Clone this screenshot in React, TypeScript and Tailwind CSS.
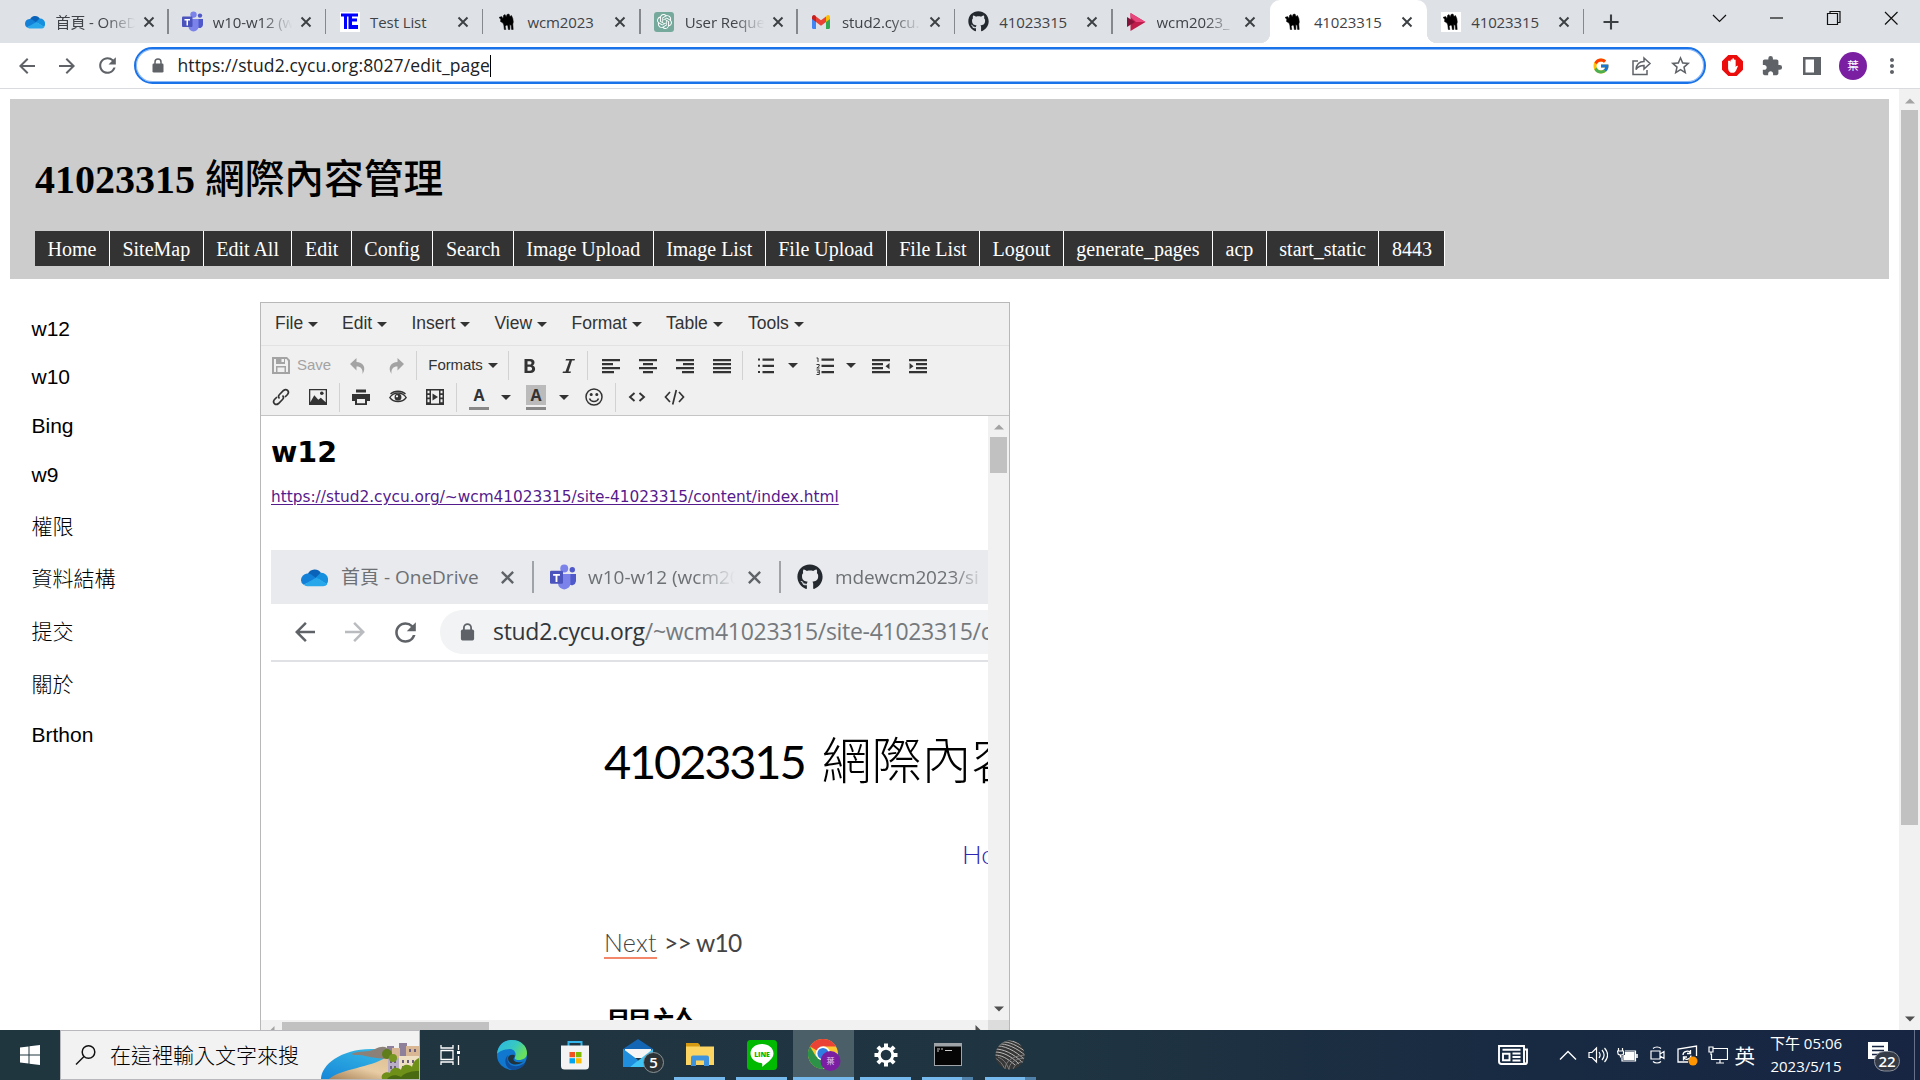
import React from "react";
import type { ReactNode } from "react";
import {
  MdArrowBack,
  MdArrowForward,
  MdRefresh,
  MdExtension,
  MdStarBorder,
  MdMoreVert,
} from "react-icons/md";
import { FcGoogle } from "react-icons/fc";
import { FaGithub } from "react-icons/fa";
import { SiOpenai } from "react-icons/si";

/* ---------- brand icons ---------- */

function OneDrive({ className = "w-5 h-5" }: { className?: string }) {
  return (
    <svg viewBox="0 0 20 20" className={className}>
      <path d="M5 7.5A5.5 5.5 0 0 1 15 7l-3 6-7 1z" fill="#0a63b8" />
      <path d="M4.5 7A5 5 0 0 0 0 12a4 4 0 0 0 2 3.4L12 11 7.5 7.8A5 5 0 0 0 4.5 7z" fill="#1380d8" />
      <path d="M14.5 6.5A5 5 0 0 1 20 12a4 4 0 0 1-1 3l-8-5z" fill="#1490df" />
      <path d="M2 15.3 11.5 10l8 5A4 4 0 0 1 16 16.5H4.5a4 4 0 0 1-2.5-1.2z" fill="#28a8ea" />
    </svg>
  );
}

function Teams({ className = "w-[21px] h-[21px]" }: { className?: string }) {
  return (
    <svg viewBox="0 0 21 21" className={className}>
      <circle cx="11.5" cy="3.6" r="3.2" fill="#7b83eb" />
      <circle cx="18" cy="4.6" r="2.2" fill="#5059c9" />
      <path d="M14 8h7v6a3.5 3.5 0 0 1-6 2z" fill="#5059c9" />
      <path d="M6.500 8h10v7.500a5 5 0 0 1-10 0z" fill="#7b83eb" />
      <rect x="0" y="5.500" width="10.500" height="10.500" rx="1" fill="#4b53bc" />
      <path d="M2.500 8h5.500v1.500H6v5H4.500v-5h-2z" fill="#fff" />
    </svg>
  );
}

function TestList() {
  return (
    <svg viewBox="0 0 20 20" className="w-5 h-5">
      <rect width="20" height="20" fill="#fff" />
      <path d="M1 1.500h17v3h-6v2h5v3h-5v3.500h6v4H8.500V4.500H7v12.500H4V4.500H1z" fill="#0000ff" />
    </svg>
  );
}

function Camel({ boxed = false }: { boxed?: boolean }) {
  return (
    <svg viewBox="0 0 20 20" className="w-5 h-5">
      {boxed && <rect width="20" height="20" fill="#fff" />}
      <path
        d="M2 5.500 4.500 4.500 6 6.500 6.500 3.500 8 2.500 9.200 5 10 2.500 12 2 13 4.500 14.500 3.500 15.800 6.500 16.300 10 15.800 12 16.200 17.500H14.600L14.200 13.500 12.800 12.500 12.900 17.500H11.300L10.800 13.500 9.500 13 8.200 14.500 8.800 17.500H7.300L6.800 13 6 11 3.500 9.500 3.800 7.200z"
        fill="#000"
        stroke="#000"
        strokeWidth=".5"
      />
    </svg>
  );
}

function ChatGpt() {
  return (
    <span className="flex h-5 w-5 items-center justify-center rounded-[3px] bg-[#75a99c] text-white">
      <SiOpenai size={15} />
    </span>
  );
}

function Gmail() {
  return (
    <svg viewBox="0 0 20 20" className="w-5 h-5">
      <path d="M1 6v9.500A1.500 1.500 0 0 0 2.500 17H5V9z" fill="#4285f4" />
      <path d="M19 6v9.500a1.500 1.500 0 0 1-1.500 1.500H15V9z" fill="#34a853" />
      <path d="M15 5v5l4-3V5a2 2 0 0 0-3.300-1.500z" fill="#fbbc04" />
      <path d="M5 10V4.500l5 3.800 5-3.800V10l-5 3.800z" fill="#ea4335" />
      <path d="M1 5v2l4 3V4.500L4.300 3.500A2 2 0 0 0 1 5z" fill="#c5221f" />
    </svg>
  );
}

function Stream() {
  return (
    <svg viewBox="0 0 20 20" className="w-5 h-5">
      <path d="M4.500 1 19.500 10 4.500 19z" fill="#c01c4b" />
      <path d="M4.500 1 19.500 10H10L4.500 5z" fill="#e8467c" />
      <path d="M1 5v10l8-5z" fill="#86143a" />
    </svg>
  );
}

/* ---------- browser chrome ---------- */

function Cross({ className, color = "#3c4043" }: { className: string; color?: string }) {
  return (
    <svg viewBox="0 0 12 12" className={className} stroke={color} strokeWidth="1.900" fill="none">
      <path d="M1.500 1.500 10.500 10.500M10.500 1.500 1.500 10.500" />
    </svg>
  );
}

function Lock({ className }: { className: string }) {
  return (
    <svg viewBox="0 0 12 15" className={className}>
      <path d="M3 7V4a3 3 0 0 1 6 0v3" fill="none" stroke="#5f6368" strokeWidth="1.500" />
      <rect x=".5" y="5.500" width="11" height="9" rx="1.300" fill="#5f6368" />
    </svg>
  );
}

type TabInfo = { icon: ReactNode; title: string; active?: boolean; fade?: boolean; sep?: boolean };

const tabs: TabInfo[] = [
  { icon: <OneDrive />, title: "首頁 - OneD", fade: true, sep: true },
  { icon: <Teams />, title: "w10-w12 (w", fade: true, sep: true },
  { icon: <TestList />, title: "Test List", sep: true },
  { icon: <Camel />, title: "wcm2023", sep: true },
  { icon: <ChatGpt />, title: "User Reque", fade: true, sep: true },
  { icon: <Gmail />, title: "stud2.cycu.", fade: true, sep: true },
  { icon: <FaGithub size={21} color="#24292f" />, title: "41023315", sep: true },
  { icon: <Stream />, title: "wcm2023_", fade: true },
  { icon: <Camel />, title: "41023315", active: true },
  { icon: <Camel boxed />, title: "41023315", sep: true },
];

const ui = "font-['Open_Sans','Noto_Sans_CJK_TC',sans-serif]";

function Tab({ icon, title, active, fade, sep }: TabInfo) {
  return (
    <div className={"relative flex h-[43px] w-[157.3px] shrink-0 items-center pl-[13px] " + (active ? "rounded-t-[10px] bg-white" : "")}>
      {active && (
        <>
          <span className="absolute bottom-0 -left-[10px] h-[10px] w-[10px] bg-[radial-gradient(circle_at_0_0,transparent_10px,#fff_10.5px)]" />
          <span className="absolute bottom-0 -right-[10px] h-[10px] w-[10px] bg-[radial-gradient(circle_at_100%_0,transparent_10px,#fff_10.5px)]" />
        </>
      )}
      <span className="flex w-[21px] shrink-0 justify-center">{icon}</span>
      <span
        className={
          "ml-[10px] w-[81px] whitespace-nowrap pt-px text-[15px] leading-6 tracking-[-0.1px] text-[#3f4347] " +
          (fade ? "[mask-image:linear-gradient(to_right,#000_60%,transparent_98%)]" : "")
        }
      >
        {title}
      </span>
      <Cross className="ml-[6px] h-[12px] w-[12px] shrink-0" />
      {sep && <span className="ml-auto h-[25px] w-[1.5px] bg-[#85888c]" />}
    </div>
  );
}

function TabStrip() {
  return (
    <div className="flex h-[43px] bg-[#dee1e6] pl-[11.5px]">
      {tabs.map((t, i) => (
        <Tab key={i} {...t} />
      ))}
      <div className="flex flex-1 items-center">
        <svg viewBox="0 0 16 16" className="ml-[19px] h-[16px] w-[16px]" stroke="#3c4043" strokeWidth="2.100">
          <path d="M8 .5v15M.5 8h15" />
        </svg>
        <svg viewBox="0 0 200 20" className="mb-[7px] ml-auto mr-[17px] h-5 w-[200px]" fill="none" stroke="#111" strokeWidth="1.2">
          <path d="M10 7 16.500 13.500 23 7" />
          <path d="M67 10H80" />
          <path d="M124.500 5.500h10v11h-10zM127 5.500v-2h10v11h-2" />
          <path d="M182 4 194.500 16.500M194.500 4 182 16.500" />
        </svg>
      </div>
    </div>
  );
}

function Toolbar() {
  return (
    <div className="flex h-[46px] items-center border-b border-[#d9dbde] bg-white text-[#5f6368]">
      <div className="flex w-[134px] items-center gap-[16px] pl-[15px]">
        <MdArrowBack size={24} />
        <MdArrowForward size={24} />
        <MdRefresh size={25} />
      </div>
      <div className="flex h-[37px] w-[1572px] items-center rounded-full border-2 border-[#1a73e8] pl-[16px] pr-[12px] shadow-[inset_0_0_0_1px_#8ab8f7]">
        <Lock className="h-[15px] w-[12px]" />
        <span className="mb-px ml-[13.5px] whitespace-nowrap text-[17.5px] tracking-[0.12px] text-[#202124]">
          https://stud2.cycu.org:8027/edit_page
        </span>
        <span className="h-[22px] w-px bg-black" />
        <div className="ml-auto flex items-center">
          <FcGoogle size={18} />
          <svg viewBox="0 0 22 22" className="ml-[20px] h-[22px] w-[22px]" fill="none" stroke="#5f6368" strokeWidth="1.500">
            <path d="M8 6H3v13.500h14V15" />
            <path d="M14 3l6 5.500-6 5.500v-3.500c-4 0-6 1-8 4 .5-5 3.500-8 8-8z" />
          </svg>
          <MdStarBorder size={23} className="ml-[17px]" />
        </div>
      </div>
      <svg viewBox="0 0 20 20" className="ml-[16px] h-[21px] w-[21px]">
        <path d="M6 0h8l6 6v8l-6 6H6l-6-6V6z" fill="#eb0c0c" />
        <path
          d="M5.800 6v6.500c0 3 2 4.500 4 4.500s3-1 3.700-2.500l1.700-4c-.7-.7-1.500-.3-2.200 1V5c0-1-1.500-1-1.500 0V3.800c0-1-1.700-1-1.700 0V5c0-1-1.600-1-1.600 0v2c0-1.500-2.400-1.800-2.400-1z"
          fill="#fff"
        />
      </svg>
      <MdExtension size={22} className="ml-[18px]" />
      <svg viewBox="0 0 18 18" className="ml-[20px] h-[18px] w-[18px]">
        <path d="M0 0h18v18H0zM2.500 2.500v13H11v-13z" fill="#5f6368" fillRule="evenodd" />
      </svg>
      <span className="ml-[18px] flex h-[28px] w-[28px] items-center justify-center rounded-full bg-[#7b1fa2] text-[11.5px] text-white">
        葉
      </span>
      <MdMoreVert size={24} className="ml-[13px]" />
    </div>
  );
}

/* ---------- page ---------- */

const nav = [
  "Home", "SiteMap", "Edit All", "Edit", "Config", "Search", "Image Upload", "Image List",
  "File Upload", "File List", "Logout", "generate_pages", "acp", "start_static", "8443",
];

function Header() {
  return (
    <header className="h-[180px] bg-[#cccccc] pl-[25px] font-['Liberation_Serif','Noto_Sans_CJK_TC',serif]">
      <h1 className="h-[132px] whitespace-nowrap pt-[51px] text-[40px] font-bold leading-[60px] text-black">
        41023315 <span className="text-[39.7px] font-medium">網際內容管理</span>
      </h1>
      <nav className="flex">
        {nav.map((n) => (
          <a key={n} className="h-[35px] whitespace-nowrap border-r border-white bg-[#333] px-[12.5px] text-[20px] leading-[36px] text-white">
            {n}
          </a>
        ))}
      </nav>
    </header>
  );
}

const side: [string, string][] = [
  ["w12", "h-[49px]"],
  ["w10", "h-[48px]"],
  ["Bing", "h-[49px]"],
  ["w9", "h-[50px]"],
  ["權限", "h-[53px]"],
  ["資料結構", "h-[52px]"],
  ["提交", "h-[54px]"],
  ["關於", "h-[51px]"],
  ["Brthon", "h-[49px]"],
];

function Sidebar() {
  return (
    <aside className="w-[250px] pl-[21.5px] pt-[25px] font-['Liberation_Sans','Noto_Sans_CJK_TC',sans-serif] text-[21px] text-black">
      {side.map(([t, h]) => (
        <div key={t} className={h + " flex items-center font-light"}>
          {t}
        </div>
      ))}
    </aside>
  );
}

function Caret() {
  return <span className="h-0 w-0 border-x-[5px] border-t-[5px] border-x-transparent border-t-[#333]" />;
}

function Cell({ w, children }: { w: string; children?: ReactNode }) {
  return <div className={"flex h-full shrink-0 items-center justify-center " + w}>{children}</div>;
}

function Sep({ className = "" }: { className?: string }) {
  return <span className={"h-[29px] w-px shrink-0 bg-[#d2d2d2] " + className} />;
}

function Icon({ children, fill = "#333" }: { children: ReactNode; fill?: string }) {
  return (
    <svg viewBox="0 0 18 18" className="h-[18px] w-[18px] shrink-0" fill={fill}>
      {children}
    </svg>
  );
}

const menus: [string, string][] = [
  ["File", "w-[67px]"],
  ["Edit", "w-[69.5px]"],
  ["Insert", "w-[83px]"],
  ["View", "w-[77px]"],
  ["Format", "w-[94.5px]"],
  ["Table", "w-[82px]"],
  ["Tools", "w-[82px]"],
];

function EditorBars() {
  return (
    <div className="bg-[#f0f0f0] font-['Liberation_Sans',sans-serif] text-[#333]">
      <div className="flex h-[42px] items-center pl-[14px] text-[17.5px] leading-none">
        {menus.map(([m, w]) => (
          <span key={m} className={w + " flex items-center gap-[5px] whitespace-nowrap"}>
            {m}
            <Caret />
          </span>
        ))}
      </div>
      <div className="h-[71px] border-y border-t-[#e2e2e2] border-b-[#c5c5c5]">
        <div className="flex h-[32px] items-center pt-[7px]">
          <Cell w="w-[78px] pl-[3px]">
            <svg viewBox="0 0 18 17" className="mr-[7px] h-[17px] w-[18px]" fill="#a3a3a3" fillRule="evenodd">
              <path d="M0 0h15l3 3v14H0zM2 2v13h2V9h10v6h2V4l-1.500-2H13v5H4V2zM9.500 2v3H12V2zM5.500 10.500V15h7v-4.500z" />
            </svg>
            <span className="text-[15px] text-[#a3a3a3]">Save</span>
          </Cell>
          <Cell w="w-[38px]">
            <Icon fill="#a3a3a3">
              <path d="M7.500 1v4c6 0 10.500 5 6 12C14 12 12 9.500 7.500 9.500v4L1 7z" />
            </Icon>
          </Cell>
          <Cell w="w-[38px]">
            <Icon fill="#a3a3a3">
              <path d="M10.500 1v4C4.500 5 0 10 4.500 17 4 12 6 9.500 10.500 9.500v4L17 7z" />
            </Icon>
          </Cell>
          <Sep className="ml-px" />
          <Cell w="w-[91px] pl-px">
            <span className="mr-[5px] text-[15px] tracking-[-0.1px]">Formats</span>
            <Caret />
          </Cell>
          <Sep />
          <Cell w="w-[41px]">
            <Icon>
              <path d="M3.500 2h6c5 0 5 5.500 2 6.500 4 1 3.500 7.500-2 7.500h-6zM6.500 4.300v3.300H9c2 0 2-3.300 0-3.300zm0 5.400v4H9c2.800 0 2.800-4 0-4z" fillRule="evenodd" />
            </Icon>
          </Cell>
          <Cell w="w-[37px]">
            <Icon>
              <path d="M6 2h9l-.5 1.500h-2.500L8.500 14.500H11l-.5 1.500h-8L3 14.500h2.500L9.500 3.500h-4z" />
            </Icon>
          </Cell>
          <Sep />
          <Cell w="w-[41px] pl-[4px]">
            <Icon><path d="M0 2h18v2.300H0zM0 6h11v2.300H0zM0 10h18v2.300H0zM0 14h12v2.300H0z" /></Icon>
          </Cell>
          <Cell w="w-[37px]">
            <Icon><path d="M0 2h18v2.300H0zM4 6h10v2.300H4zM0 10h18v2.300H0zM4 14h10v2.300H4z" /></Icon>
          </Cell>
          <Cell w="w-[37px]">
            <Icon><path d="M0 2h18v2.300H0zM7 6h11v2.300H7zM0 10h18v2.300H0zM6 14h12v2.300H6z" /></Icon>
          </Cell>
          <Cell w="w-[37px]">
            <Icon><path d="M0 2h18v2.300H0zM0 6h18v2.300H0zM0 10h18v2.300H0zM0 14h18v2.300H0z" /></Icon>
          </Cell>
          <Sep className="ml-[2px]" />
          <Cell w="w-[46px]">
            <Icon><path d="M5.500 1.500H17v2.200H5.500zM5.500 7.800H17V10H5.500zM5.500 14H17v2.200H5.500zM1 1.500h2v2H1zM1 7.800h2v2H1zM1 14h2v2H1z" /></Icon>
          </Cell>
          <Cell w="w-[8px]"><Caret /></Cell>
          <Cell w="w-[50px] pl-[5px]">
            <svg viewBox="0 0 18 18" className="h-[18px] w-[18px]" fill="#333">
              <path d="M5.500 1.500H18v2.200H5.500zM5.500 7.800H18V10H5.500zM5.500 14H18v2.200H5.500z" />
              <path d="M.5 1H2v4M.5 7.500h2.700v1.700L.8 11h2.700M.5 13h2.800v4.500H.5M1 15.200h2" fill="none" stroke="#333" />
            </svg>
          </Cell>
          <Cell w="w-[8px]"><Caret /></Cell>
          <Cell w="w-[52px]">
            <Icon><path d="M0 2h18v2.300H0zM0 6h11v2.300H0zM0 10h11v2.300H0zM0 14h18v2.300H0zM17.500 6v6.300L13.500 9.200z" /></Icon>
          </Cell>
          <Cell w="w-[22px]">
            <Icon><path d="M0 2h18v2.300H0zM7 6h11v2.300H7zM7 10h11v2.300H7zM0 14h18v2.300H0zM.5 6v6.300L4.500 9.200z" /></Icon>
          </Cell>
        </div>
        <div className="flex h-[34px] items-center pt-[4px]">
          <Cell w="w-[38px] pl-[2px]">
            <svg viewBox="0 0 18 18" className="h-[18px] w-[18px]" fill="none" stroke="#333" strokeWidth="1.700">
              <path d="M7.500 10.500c-1.500-1.500-1-3 0-4l4-4c3-2.500 6.500 1 4 4l-2.500 2.500" />
              <path d="M10.500 7.500c1.500 1.500 1 3 0 4l-4 4c-3 2.500-6.500-1-4-4L5 9" />
            </svg>
          </Cell>
          <Cell w="w-[38px]">
            <Icon><path d="M0 1h18v16H0zM1.300 2.300v12l4-7 4 4.500 2.500-2 4.900 4.500v-12z" fillRule="evenodd" /><circle cx="12.800" cy="5.200" r="1.800" /></Icon>
          </Cell>
          <Sep className="ml-[2px]" />
          <Cell w="w-[39px] pl-[3px]">
            <Icon><path d="M4 1.500h10v3H4zM0 6h18v7h-3v4H3v-4H0zM5 11v4.200h8V11z" fillRule="evenodd" /></Icon>
          </Cell>
          <Cell w="w-[37px]">
            <svg viewBox="0 0 18 18" className="h-[18px] w-[18px]" fill="none" stroke="#333" strokeWidth="1.300">
              <path d="M.8 9.500c4-6 12.400-6 16.400 0-4 5.500-12.400 5.500-16.400 0z" />
              <path d="M1.500 6C5 2.300 13 2.300 16.500 6" />
              <circle cx="9" cy="9.300" r="2.800" fill="#333" />
              <circle cx="8" cy="8.300" r="1.100" fill="#fff" stroke="none" />
            </svg>
          </Cell>
          <Cell w="w-[37px]">
            <Icon>
              <path d="M0 1h18v16H0zM5 2.500v13h8v-13zM1.500 2.800v2.400h2V2.800zm0 4.200v2.400h2V7zm0 4.200v3h2v-3zM14.500 2.800v2.400h2V2.800zm0 4.200v2.400h2V7zm0 4.200v3h2v-3z" fillRule="evenodd" />
              <path d="M6.500 5.500 12 9l-5.500 3.500z" />
            </Icon>
          </Cell>
          <Sep className="ml-[3px]" />
          <Cell w="w-[44px]">
            <span className="flex flex-col items-center">
              <span className="flex h-[20px] w-5 items-center justify-center font-['Open_Sans',sans-serif] text-[16px] font-bold leading-5">A</span>
              <span className="mt-[2px] h-[3px] w-5 bg-[#888]" />
            </span>
          </Cell>
          <Cell w="w-[10px]"><Caret /></Cell>
          <Cell w="w-[50px]">
            <span className="flex flex-col items-center">
              <span className="flex h-[20px] w-5 items-center justify-center bg-[#bbb] font-['Open_Sans',sans-serif] text-[16px] font-bold leading-5">A</span>
              <span className="mt-[2px] h-[3px] w-5 bg-[#888]" />
            </span>
          </Cell>
          <Cell w="w-[6px]"><Caret /></Cell>
          <Cell w="w-[48px]">
            <svg viewBox="0 0 18 18" className="ml-[6px] h-[18px] w-[18px]" fill="none" stroke="#333" strokeWidth="1.500">
              <circle cx="9" cy="9" r="8" />
              <path d="M4.500 10.500c1.500 4 7.500 4 9 0" />
              <circle cx="6.200" cy="6.500" r=".8" fill="#333" />
              <circle cx="11.800" cy="6.500" r=".8" fill="#333" />
            </svg>
          </Cell>
          <Cell w="w-0"><Sep /></Cell>
          <Cell w="w-[44px]">
            <svg viewBox="0 0 18 18" className="h-[18px] w-[18px]" fill="none" stroke="#333" strokeWidth="1.900">
              <path d="M6.500 5 2 9l4.500 4M11.500 5 16 9l-4.500 4" />
            </svg>
          </Cell>
          <Cell w="w-[30px]">
            <svg viewBox="0 0 21 18" className="h-[18px] w-[21px]" fill="none" stroke="#333" strokeWidth="1.700">
              <path d="M6 4 1.500 9 6 14M15 4l4.500 5L15 14M12.300 2 8.700 16.500" />
            </svg>
          </Cell>
        </div>
      </div>
    </div>
  );
}

function PastedShot() {
  return (
    <div className={"w-[1200px] " + ui}>
      <div className="flex h-[54px] items-center bg-[#e8eaed] text-[20px] text-[#6d7074]">
        <OneDrive className="ml-[30px] h-[27px] w-[27px] shrink-0" />
        <span className="ml-[13px] w-[150px] whitespace-nowrap text-[19px]">首頁 - OneDrive</span>
        <Cross color="#5f6368" className="ml-[9px] h-[15px] w-[15px] shrink-0" />
        <span className="ml-[17px] h-[32px] w-[2px] shrink-0 bg-[#a0a3a7]" />
        <Teams className="ml-[16px] h-[26px] w-[26px] shrink-0" />
        <span className="ml-[12px] w-[150px] whitespace-nowrap text-[19px] [mask-image:linear-gradient(to_right,#000_72%,transparent_98%)]">
          w10-w12 (wcm20
        </span>
        <Cross color="#5f6368" className="ml-[9px] h-[15px] w-[15px] shrink-0" />
        <span className="ml-[17px] h-[32px] w-[2px] shrink-0 bg-[#a0a3a7]" />
        <FaGithub size={26} color="#24292f" className="ml-[16px] shrink-0" />
        <span className="ml-[12px] w-[150px] whitespace-nowrap text-[19px] tracking-[-0.15px] [mask-image:linear-gradient(to_right,#000_78%,transparent_100%)]">
          mdewcm2023/si
        </span>
      </div>
      <div className="flex h-[58px] items-center border-b-2 border-[#dfe1e4] text-[#5f6368]">
        <MdArrowBack size={30} className="ml-[19px]" />
        <MdArrowForward size={30} color="#b9bbbe" className="ml-[20px]" />
        <MdRefresh size={31} className="ml-[20px]" />
        <div className="ml-[19px] flex h-[44px] flex-1 items-center rounded-l-full bg-[#f1f3f4] pl-[20px]">
          <Lock className="h-[18px] w-[15px]" />
          <span className="mb-[2px] ml-[18px] whitespace-nowrap text-[23px] tracking-[-0.3px] text-[#75797d]">
            <span className="text-[#333639]">stud2.cycu.org</span>/~wcm41023315/site-41023315/c
          </span>
        </div>
      </div>
      <div className="pl-[333px] pt-[64px] font-['Lato','Noto_Sans_CJK_TC',sans-serif]">
        <div className="h-[68px] whitespace-nowrap text-[47px] leading-[68px] text-black">
          <span className="tracking-[-2.2px]">41023315</span>
          <span className="ml-[17px] text-[50px] font-light">網際內容</span>
        </div>
        <div className="mt-[42px] pl-[358px] text-[26px] font-light leading-[36px] text-[#2f26b5]">Ho</div>
        <div className="mt-[52px] whitespace-nowrap text-[25px] leading-[36px] text-[#444]">
          <span className="border-b-2 border-[#f4876a] font-light tracking-[0.3px]">Next</span>
          <span className="ml-[7px] text-[24.500px] tracking-[-0.700px]">&gt;&gt; w10</span>
        </div>
        <div className="mt-[39px] pl-[2px] text-[46px] leading-[58px] text-black">關於</div>
      </div>
    </div>
  );
}

function Triangle({ dir, color }: { dir: "up" | "down" | "left" | "right"; color: string }) {
  const d = {
    up: "M0 7.500 5 2.500 10 7.500z",
    down: "M0 2.500 5 7.500 10 2.500z",
    left: "M7.500 0 2.500 5 7.500 10z",
    right: "M2.500 0 7.500 5 2.500 10z",
  }[dir];
  return (
    <svg viewBox="0 0 10 10" className="h-[10px] w-[10px] shrink-0" fill={color}>
      <path d={d} />
    </svg>
  );
}

function Editor() {
  return (
    <section className="mt-[23px] flex h-[760px] w-[750px] flex-col border border-[#b8b8b8]">
      <EditorBars />
      <div className="flex h-[604px] shrink-0">
        <div className="w-[727px] overflow-hidden pl-[10px] font-['DejaVu_Sans',sans-serif]">
          <h2 className="h-[66px] pt-[20px] text-[28.500px] font-bold leading-[34px] text-black">w12</h2>
          <p className="h-[68px] whitespace-nowrap pt-[3px] text-[15.330px] leading-6 text-[#551a8b] underline underline-offset-2">
            https://stud2.cycu.org/~wcm41023315/site-41023315/content/index.html
          </p>
          <PastedShot />
        </div>
        <div className="flex w-[21px] flex-col items-center bg-[#f1f1f1] pb-[6px] pt-[6px]">
          <Triangle dir="up" color="#a3a3a3" />
          <span className="mt-[5px] h-[36px] w-[17px] bg-[#c1c1c1]" />
          <span className="flex-1" />
          <Triangle dir="down" color="#505050" />
        </div>
      </div>
      <div className="flex h-[21px] shrink-0 bg-[#f1f1f1]">
        <span className="flex w-[21px] justify-center pt-[6px]"><Triangle dir="left" color="#a3a3a3" /></span>
        <span className="mt-[2px] h-[17px] w-[207px] bg-[#c1c1c1]" />
        <span className="ml-auto flex w-[21px] justify-center pt-[5px]"><Triangle dir="right" color="#505050" /></span>
        <span className="w-[21px] bg-[#dcdcdc]" />
      </div>
    </section>
  );
}

/* ---------- taskbar ---------- */

function Illustration() {
  return (
    <svg viewBox="0 0 98 48" className="h-[48px] w-[98px]">
      <defs>
        <linearGradient id="sea" x1="0" y1="1" x2="1" y2="0">
          <stop offset="0" stopColor="#1787d8" />
          <stop offset="1" stopColor="#3cc4e8" />
        </linearGradient>
        <linearGradient id="sand" x1="0" y1="1" x2="1" y2="0">
          <stop offset="0" stopColor="#a98258" />
          <stop offset=".4" stopColor="#e8cda4" />
          <stop offset="1" stopColor="#d9b98b" />
        </linearGradient>
      </defs>
      <path d="M0 48C0 34 20 18 50 18h48v30z" fill="url(#sea)" />
      <path d="M8 48C20 38 50 36 64 27l34-5v26z" fill="url(#sand)" />
      <path d="M30 23c10-4 16-1 24-5s12-2 16 2v8c-8 0-18-1-26-3-4-2-10 0-14-2z" fill="#8b8178" />
      <path d="M66 15h7v12h-7zM78 12h8v14h-8z" fill="#8e7f9b" />
      <path d="M71 17h8v10h-8zM85 15h13v13h-13z" fill="#d9b694" />
      <path d="M67 27h12v18H67z" fill="#b9aec6" />
      <path d="M78 25h20v18H78z" fill="#efe0c4" />
      <path
        d="M69 29h2v3h-2zM73 29h2v3h-2zM69 35h2v3h-2zM73 35h2v3h-2zM81 29h2v3h-2zM86 29h2v3h-2zM91 29h2v3h-2zM81 35h2v3h-2zM86 35h2v3h-2zM88 18h2v3h-2zM93 18h2v3h-2z"
        fill="#6b5f7c"
      />
      <circle cx="66" cy="23" r="5" fill="#5f7d1b" />
      <circle cx="72" cy="27" r="4" fill="#76961f" />
      <path d="M61 48c-2-6 5-8 8-6 1-7 9-6 11-3 1-7 9-6 11-3 1-5 4-8 7-9v21z" fill="#6f9018" />
      <path d="M66 48c3-4 9-5 14-2 4-5 12-6 18-6v8z" fill="#4a6a12" />
    </svg>
  );
}

function Task({ w, bar, active, children }: { w: string; bar?: "full" | "multi"; active?: boolean; children: ReactNode }) {
  return (
    <div className={"flex h-full shrink-0 flex-col items-center " + w + (active ? " bg-[#4b5f69]" : "")}>
      <div className="flex flex-1 items-center justify-center pt-[2px]">{children}</div>
      <div className={"flex h-[3px] " + (active ? "w-full" : "w-[51px]")}>
        {bar && <span className="h-full flex-1 bg-[#76b9ed]" />}
        {bar === "multi" && <span className="h-full w-[11px] bg-[#4f81ab]" />}
      </div>
    </div>
  );
}

function Taskbar() {
  return (
    <footer className={"flex h-[50px] bg-[linear-gradient(to_right,#20363f,#1f3441_55%,#182a42_80%,#172543)] text-white " + ui}>
      <div className="flex w-[60px] items-center justify-center">
        <svg viewBox="0 0 20 20" className="h-5 w-5" fill="#fff">
          <path d="M0 2.600 8.500 1.500v8H0zM9.500 1.300 20 0v9.500H9.500zM0 10.500h8.500v8L0 17.400zM9.500 10.500H20V20L9.500 18.700z" />
        </svg>
      </div>
      <div className="flex w-[360px] items-center border border-[#b9b9bd] bg-[#f2f2f2] pl-[14px] text-black">
        <svg viewBox="0 0 22 22" className="h-[22px] w-[22px]" fill="none" stroke="#111" strokeWidth="1.500">
          <circle cx="13.500" cy="8" r="6.300" />
          <path d="M9 12.500 1 20.500" />
        </svg>
        <span className="ml-[13px] whitespace-nowrap font-['Noto_Sans_CJK_TC',sans-serif] text-[21px] font-light">在這裡輸入文字來搜</span>
        <span className="ml-auto"><Illustration /></span>
      </div>
      <Task w="w-[60px]">
        <svg viewBox="0 0 20 22" className="h-[22px] w-[20px]" fill="none" stroke="#fff" strokeWidth="1.300">
          <path d="M1 1v3h12V1M1 6.500h12v9H1zM1 21v-3h12v3M18.500 1v5M18.500 12v9" />
          <path d="M17 7h3v3h-3z" fill="#fff" stroke="none" />
        </svg>
      </Task>
      <Task w="w-[64px]">
        <svg viewBox="0 0 30 30" className="h-[30px] w-[30px]">
          <defs>
            <linearGradient id="edgeTop" x1="0" y1="0" x2="1" y2=".5">
              <stop offset="0" stopColor="#2bb6e8" />
              <stop offset=".6" stopColor="#38c9c0" />
              <stop offset="1" stopColor="#6ae05a" />
            </linearGradient>
          </defs>
          <circle cx="15" cy="15" r="15" fill="#1178d0" />
          <path d="M0 14C1 4 8 0 15 0c9 0 15 6 15 13 0 5-4 7-8 7-3 0-5-1-4-3 2-4-1-8-5-8-6 0-12 3-13 5z" fill="url(#edgeTop)" />
          <path d="M11 15c-3 8 5 15 15 9 2-1 2.500-1 1.500.5C24 29 19 30 15 30 7 28 7 18 11 15z" fill="#0f4f9e" />
          <path d="M27.500 21c-3 2-11 2-11-2 0-1 2-2 1-4-3-1-6 0-6.500 3 0 7 9 9 16.500 3z" fill="#20343f" />
        </svg>
      </Task>
      <Task w="w-[61px]">
        <svg viewBox="0 0 30 30" className="h-[30px] w-[30px]">
          <path d="M8.500 7V2h13v5" fill="none" stroke="#35b4ea" strokeWidth="2" />
          <path d="M1 5.500h28V26a3.500 3.500 0 0 1-3.500 3.500h-21A3.500 3.500 0 0 1 1 26z" fill="#f3f3f3" />
          <path d="M9.500 12H15v5.200H9.500z" fill="#f25022" />
          <path d="M16 12h5.500v5.200H16z" fill="#7fba00" />
          <path d="M9.500 18.200H15v5.200H9.500z" fill="#00a4ef" />
          <path d="M16 18.200h5.500v5.200H16z" fill="#ffb900" />
        </svg>
      </Task>
      <Task w="w-[64px]">
        <svg viewBox="0 0 42 36" className="ml-[11px] mt-[2px] h-[36px] w-[42px]">
          <path d="M1 11 16 1l15 10v8H1z" fill="#1366b3" />
          <path d="M3 11h26v9H3z" fill="#f5f5f5" />
          <path d="M1 11 24 29H1z" fill="#2b9fe6" />
          <path d="M31 11 8 29h23z" fill="#3fc4f3" />
          <path d="M1 11l15 11L8 29H1z" fill="#1f8fdd" />
          <circle cx="31.500" cy="24.500" r="10" fill="#2b3337" stroke="#8b9498" strokeWidth="1" />
          <text x="31.500" y="30" textAnchor="middle" fontSize="15" fontWeight="600" fill="#fff" fontFamily="Open Sans">5</text>
        </svg>
      </Task>
      <Task w="w-[61px]" bar="full">
        <svg viewBox="0 0 28 24" className="h-[24px] w-[28px]">
          <path d="M0 0h12l2 2v4H0z" fill="#d69a12" />
          <path d="M0 3.500h28V22H0z" fill="#fcd462" />
          <path d="M5 23v-8.500a2 2 0 0 1 2-2h14a2 2 0 0 1 2 2V23h-5v-5.500h-8V23z" fill="#3d93dd" />
        </svg>
      </Task>
      <Task w="w-[63px]" bar="full">
        <svg viewBox="0 0 30 30" className="h-[30px] w-[30px]">
          <rect width="30" height="30" rx="3.500" fill="#00b900" />
          <path d="M15 4c6.500 0 11.500 4 11.500 9.500 0 5-5 8-11.500 13.500.5-2 .5-3.500-.5-4C8 22.500 3.500 18.500 3.500 13.500 3.500 8 8.500 4 15 4z" fill="#fff" />
          <text x="15" y="16.500" textAnchor="middle" fontSize="6.800" fontWeight="800" fill="#00b900" fontFamily="Open Sans">LINE</text>
        </svg>
      </Task>
      <Task w="w-[61px]" bar="full" active>
        <svg viewBox="0 0 33 33" className="ml-[2px] mt-[2px] h-[33px] w-[33px]">
          <circle cx="15" cy="15" r="15" fill="#fcc934" />
          <path d="M15 15 2 7.500A15 15 0 0 1 28 7.500H15z" fill="#ea4335" />
          <path d="M2 7.500A15 15 0 0 0 15 30l5-12-12-.5z" fill="#2b9248" />
          <circle cx="15" cy="14.500" r="7.200" fill="#fff" />
          <circle cx="15" cy="14.500" r="5.600" fill="#2f7de1" />
          <circle cx="22.500" cy="22" r="10" fill="#7b1fa2" />
          <text x="22.500" y="25" textAnchor="middle" fontSize="8" fill="#e3c9ee" fontFamily="Noto Sans CJK TC">葉</text>
        </svg>
      </Task>
      <Task w="w-[63px]" bar="full">
        <svg viewBox="-12 -12 24 24" className="h-[24px] w-[24px]">
          <circle r="6.800" fill="none" stroke="#fff" strokeWidth="3" />
          {[0, 45, 90, 135, 180, 225, 270, 315].map((a) => (
            <rect key={a} x="-2" y="-11.500" width="4" height="4.500" fill="#fff" transform={"rotate(" + a + ")"} />
          ))}
        </svg>
      </Task>
      <Task w="w-[61px]" bar="multi">
        <svg viewBox="0 0 28 23" className="h-[23px] w-[28px]">
          <rect width="28" height="23" fill="#9fa4a8" />
          <rect x="1" y="3.500" width="26" height="18.500" fill="#050505" />
          <path d="M3 6h3M7 6h2M11 7.500h7M3 8h2" stroke="#ccc" />
        </svg>
      </Task>
      <Task w="w-[64px]" bar="multi">
        <svg viewBox="0 0 30 30" className="h-[30px] w-[30px]">
          <defs><clipPath id="ball"><circle cx="15" cy="15" r="14.500" /></clipPath></defs>
          <g clipPath="url(#ball)">
            <rect width="30" height="30" fill="#363636" />
            <path
              d="M0 6c8-1 20 4 30 14M0 9c8 0 18 4 28 14M0 12c8 0 16 4 24 12M0 15c6 0 12 3 20 10M3 4c8-1 19 4 28 12M6 2c8-1 17 4 25 10M10 0c6 0 14 3 20 8M15-1c5 1 10 3 14 7"
              stroke="#b9b9b9"
              strokeWidth="1"
              fill="none"
            />
            <path d="M0 18c4 2 8 6 10 12M3 17c5 2 9 6 11 13M14 30c0-6 4-11 16-12M18 30c1-5 5-8 12-9M10 30c0-8 6-14 20-15" stroke="#7d7d7d" strokeWidth="1" fill="none" />
          </g>
        </svg>
      </Task>
      <div className="ml-auto flex items-center">
        <svg viewBox="0 0 30 20" className="h-[20px] w-[30px]" fill="none" stroke="#fff" strokeWidth="1.900">
          <path d="M1 1h25v15.500a2.500 2.500 0 0 0 2.500 2.500H3.500A2.500 2.500 0 0 1 1 16.500zM26 4.500h3V17a2 2 0 0 1-2 2" />
          <path d="M4.500 4.800h18M14.500 8.500h8M14.500 12h8M14.500 15.500h8M5 8.800h6.500v6.500H5z" />
        </svg>
        <svg viewBox="0 0 18 10" className="ml-[31px] h-[10px] w-[18px]" fill="none" stroke="#fff" strokeWidth="1.400"><path d="M1 9.500 9 1.500l8 8" /></svg>
        <svg viewBox="0 0 20 18" className="ml-[11px] h-[18px] w-[20px]" fill="none" stroke="#fff" strokeWidth="1.200">
          <path d="M1 6.500h3L8.500 2v14L4 11.500H1zM11 6c1.500 2 1.500 4 0 6M14 4c2.500 3 2.500 7 0 10M16.500 2c4 4.500 4 9.500 0 14" />
        </svg>
        <svg viewBox="0 0 21 16" className="ml-[9px] h-[16px] w-[21px]" fill="none" stroke="#fff" strokeWidth="1.200">
          <path d="M1.500 1v3M5.500 1v3M.5 4h6v2.500c0 2-5.500 2-5.500 0zM3.500 8v2h3M8 4h10.500v10H5v-3" />
          <path d="M8.500 5.500H17v7H7v-4h1.500z" fill="#fff" />
          <path d="M20 7v4" strokeWidth="1.600" />
        </svg>
        <svg viewBox="0 0 16 18" className="ml-[12px] h-[18px] w-[16px]" fill="none" stroke="#fff" strokeWidth="1.200">
          <path d="M1 5h9v8H1zM10 8l4-2.500v7L10 10M3 2.500c2-2 6-2 8 0M3 15.500c2 2 6 2 8 0" />
        </svg>
        <svg viewBox="0 0 21 21" className="ml-[11px] h-[21px] w-[21px]" fill="none" stroke="#fff" strokeWidth="1.300">
          <path d="M19.500 11V1L1 4v13h10M6 10c0-4 6-5 7.500-2M13.500 5v3.500H10M14 10.500c0 4-6 5-7.500 2M6.500 15.500V12H10" />
          <circle cx="16" cy="16" r="4.500" fill="#ff9500" stroke="none" />
        </svg>
        <svg viewBox="0 0 20 18" className="ml-[10px] h-[18px] w-[20px]" fill="none" stroke="#fff" strokeWidth="1.200">
          <path d="M5 2.500h14.500v11H3.500V8M12 13.500v3M8 17h8M1 1h4v5H1zM3 6v3" />
        </svg>
        <span className="ml-[7px] font-['Noto_Sans_CJK_TC',sans-serif] text-[20.500px] leading-6">英</span>
        <div className="ml-[11px] flex w-[80px] flex-col items-center whitespace-nowrap text-[15px] leading-[23px]">
          <span>下午 05:06</span>
          <span>2023/5/15</span>
        </div>
        <svg viewBox="0 0 32 32" className="ml-[22px] mt-[2px] h-[32px] w-[32px]">
          <path d="M0 2h20v17h-8l-4 4v-4H0z" fill="#fff" />
          <path d="M4 6.500h12M4 10.500h12M4 14.500h7" stroke="#172543" strokeWidth="1.400" />
          <rect x="6.500" y="11.500" width="25" height="19.500" rx="9.700" fill="#343b47" stroke="#8c919b" />
          <text x="19" y="27" textAnchor="middle" fontSize="15" fill="#fff" fontFamily="Open Sans" fontWeight="600">22</text>
        </svg>
        <span className="ml-[14px] mr-[5px] h-[50px] w-px bg-[#66708a]" />
      </div>
    </footer>
  );
}

export default function App() {
  return (
    <div className={"flex h-[1080px] w-[1920px] flex-col overflow-hidden bg-white " + ui}>
      <TabStrip />
      <Toolbar />
      <div className="flex h-[941px] overflow-hidden">
        <main className="w-[1899px] pl-[10px] pr-[10px] pt-[10px]">
          <Header />
          <div className="flex">
            <Sidebar />
            <Editor />
          </div>
        </main>
        <div className="flex w-[21px] flex-col items-center bg-[#f1f1f1] pb-[6px] pt-[7px]">
          <Triangle dir="up" color="#a3a3a3" />
          <span className="mt-[4px] h-[715px] w-[17px] bg-[#c1c1c1]" />
          <span className="flex-1" />
          <Triangle dir="down" color="#505050" />
        </div>
      </div>
      <Taskbar />
    </div>
  );
}
